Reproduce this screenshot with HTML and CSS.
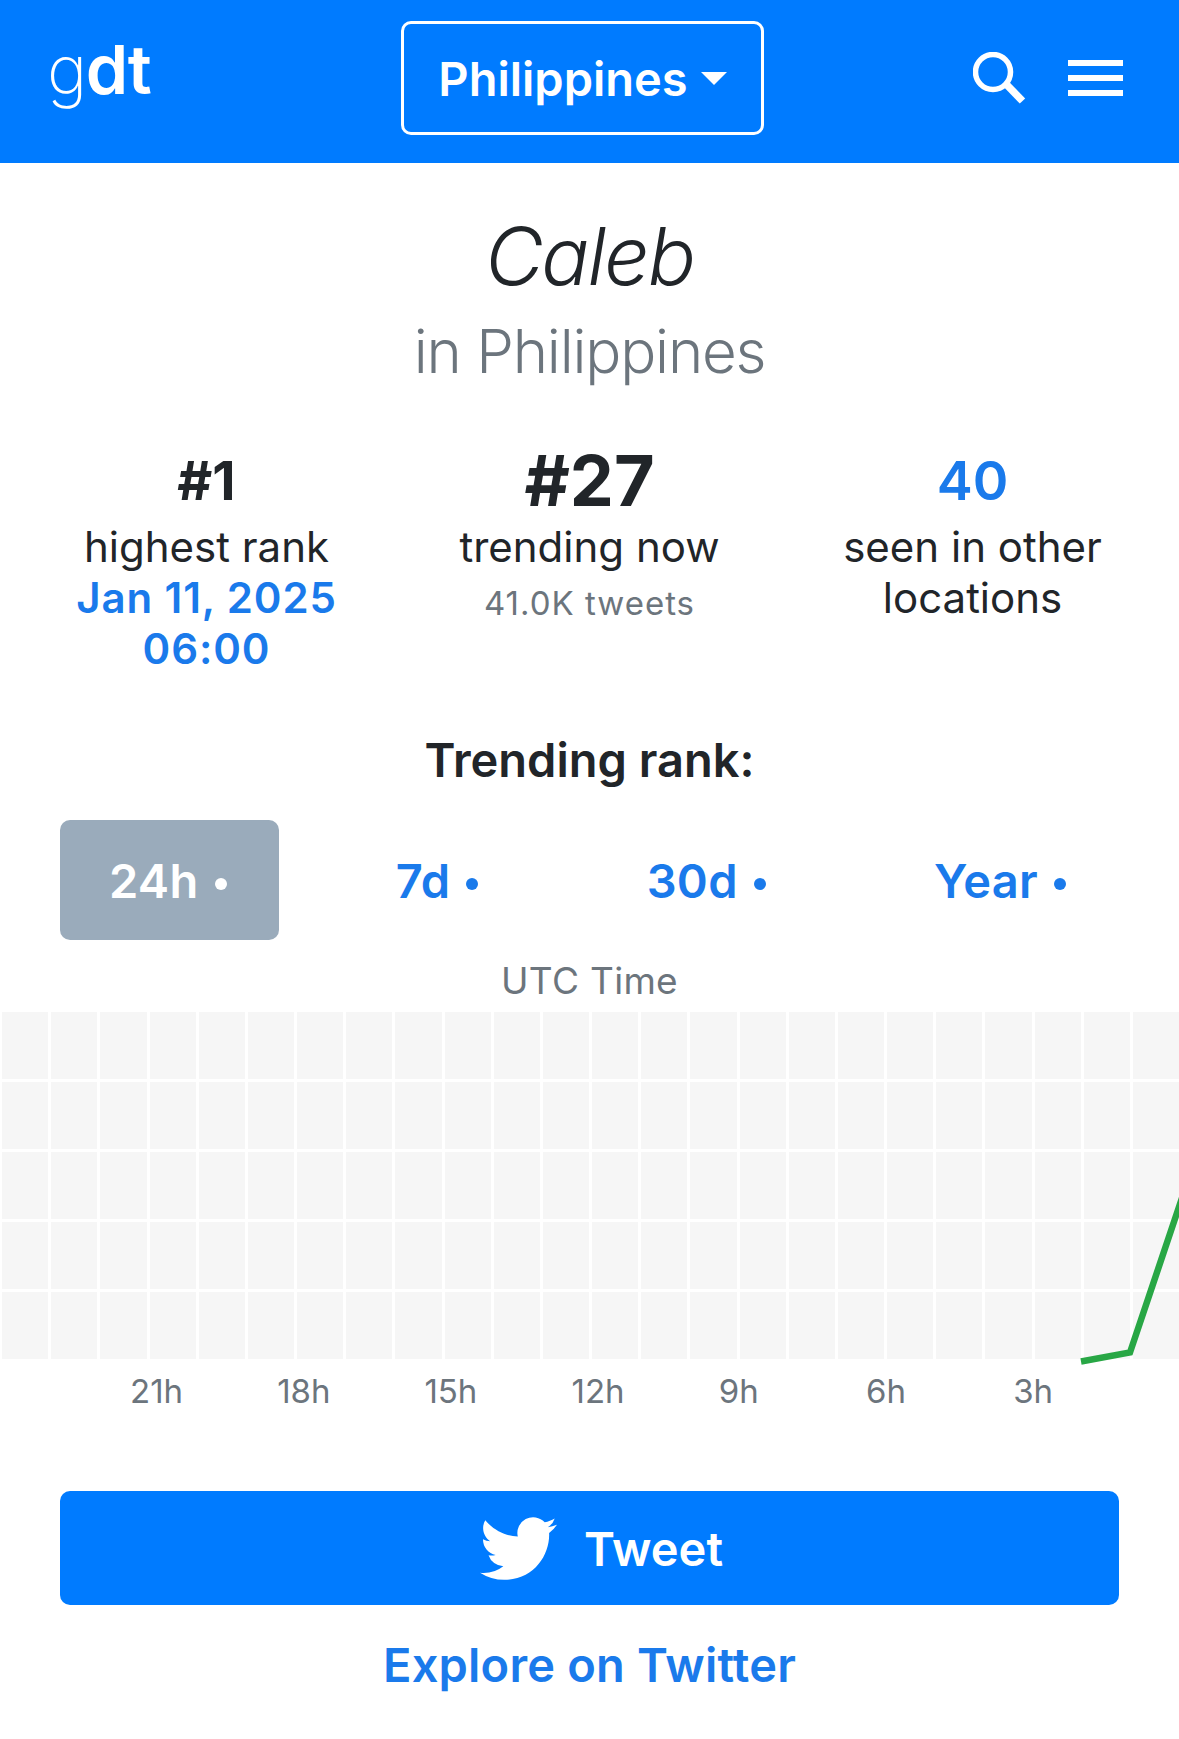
FILE: index.html
```html
<!DOCTYPE html>
<html lang="en">
<head>
<meta charset="utf-8">
<title>Caleb in Philippines</title>
<link rel="stylesheet" href="styles.css">
</head>
<body>
<header class="topbar">
  <a class="logo"><span class="logo-g">g</span><span class="logo-d">d</span><span class="logo-t">t</span></a>
  <button class="country">Philippines<span class="caret"></span></button>
  <div class="actions">
    <svg class="search" viewBox="0 0 54 54" aria-hidden="true"><circle cx="20" cy="20" r="17.500" fill="none" stroke="#fff" stroke-width="5.500"/><path d="M33 32L49.500 49" stroke="#fff" stroke-width="7.500"/></svg>
    <div class="burger"><i></i><i></i><i></i></div>
  </div>
</header>
<main>
  <h1 class="term">Caleb</h1>
  <h2 class="place">in Philippines</h2>
  <section class="stats">
    <div class="stat">
      <div class="num">#1</div>
      <div class="lab">highest rank</div>
      <a class="when">Jan 11, 2025<br>06:00</a>
    </div>
    <div class="stat">
      <div class="num big">#27</div>
      <div class="lab">trending now</div>
      <div class="sub">41.0K tweets</div>
    </div>
    <div class="stat">
      <a class="num link">40</a>
      <div class="lab">seen in other<br>locations</div>
    </div>
  </section>
  <h3 class="rank-title">Trending rank:</h3>
  <nav class="tabs">
    <a class="tab active">24h<span class="dot"></span></a>
    <a class="tab">7d<span class="dot"></span></a>
    <a class="tab">30d<span class="dot"></span></a>
    <a class="tab">Year<span class="dot"></span></a>
  </nav>
  <div class="utc">UTC Time</div>
  <div class="chart">
    <div class="grid" id="grid"></div>
    <svg class="line" viewBox="0 0 1179 356" preserveAspectRatio="none" aria-hidden="true"><path d="M1081 349.500L1130 340.500L1182 186" fill="none" stroke="#28a745" stroke-width="6.500"/></svg>
  </div>
  <div class="axis"><span>21h</span><span>18h</span><span>15h</span><span>12h</span><span>9h</span><span>6h</span><span>3h</span></div>
  <a class="tweet">
    <svg class="bird" viewBox="0 0 24 24" aria-hidden="true"><path fill="#fff" d="M23.953 4.57a10 10 0 01-2.825.775 4.958 4.958 0 002.163-2.723c-.951.555-2.005.959-3.127 1.184a4.92 4.92 0 00-8.384 4.482C7.69 8.095 4.067 6.13 1.64 3.162a4.822 4.822 0 00-.666 2.475c0 1.71.87 3.213 2.188 4.096a4.904 4.904 0 01-2.228-.616v.06a4.923 4.923 0 003.946 4.827 4.996 4.996 0 01-2.212.085 4.936 4.936 0 004.604 3.417 9.867 9.867 0 01-6.102 2.105c-.39 0-.779-.023-1.17-.067a13.995 13.995 0 007.557 2.209c9.053 0 13.998-7.496 13.998-13.985 0-.21 0-.42-.015-.63A9.935 9.935 0 0024 4.59z"/></svg>
    Tweet
  </a>
  <a class="explore">Explore on Twitter</a>
</main>
<script src="app.js"></script>
</body>
</html>
```

FILE: app.js
```js
var grid = document.getElementById('grid');
for (var i = 0; i < 120; i++) {
  grid.appendChild(document.createElement('i'));
}
```

FILE: styles.css
```css
* { box-sizing: border-box; }
html, body { margin: 0; padding: 0; }
body {
  width: 1179px;
  height: 1739px;
  overflow: hidden;
  background: #fff;
  color: #212529;
  font-family: Inter, "Liberation Sans", sans-serif;
}
a { display: block; }

.topbar {
  height: 163px;
  background: #007bff;
  display: flex;
  align-items: flex-start;
  padding: 21px 56px 0 47px;
  position: relative;
  color: #fff;
}
.logo {
  font-size: 68px;
  line-height: 1;
  letter-spacing: -1.5px;
  margin-top: 14px;
  width: 354px;
}
.logo-g { font-weight: 200; }
.logo-d { font-weight: 600; }
.logo-t { font-weight: 600; }
.country {
  width: 363px;
  height: 114px;
  border: 3px solid #fff;
  border-radius: 10px;
  background: transparent;
  color: #fff;
  font: 600 47px Inter, sans-serif;
  padding: 0;
  display: flex;
  align-items: center;
  justify-content: center;
}
.caret {
  width: 0;
  height: 0;
  margin-left: 13px;
  border-left: 13px solid transparent;
  border-right: 13px solid transparent;
  border-top: 13px solid #fff;
}
.actions {
  margin-left: auto;
  display: flex;
  align-items: flex-start;
  gap: 41px;
  padding-top: 31px;
}
.search { width: 54px; height: 54px; display: block; }
.burger {
  width: 55px;
  display: flex;
  flex-direction: column;
  gap: 9px;
  margin-top: 8px;
}
.burger i { display: block; height: 6px; background: #fff; }

.term {
  margin: 49px 0 0;
  text-align: center;
  font-size: 80px;
  line-height: 88px;
  font-weight: 300;
  font-style: italic;
  letter-spacing: -2px;
}
.place {
  margin: 16px 0 0;
  text-align: center;
  font-size: 60px;
  line-height: 70px;
  font-weight: 300;
  color: #6c757d;
  letter-spacing: -1.2px;
}
.stats {
  margin-top: 55px;
  padding: 0 15px;
  display: grid;
  grid-template-columns: repeat(3, 1fr);
  text-align: center;
  height: 246px;
}
.num {
  font-size: 54px;
  line-height: 80px;
  font-weight: 700;
}
.num.big { font-size: 70px; }
.num.link { font-weight: 600; color: #1a7aeb; font-size: 54px; }
.lab { font-size: 42px; line-height: 51px; }
.when { font-size: 42px; line-height: 51px; font-weight: 600; color: #1a7aeb; letter-spacing: 0.9px; }
.sub { font-size: 33px; line-height: 62px; color: #6c757d; letter-spacing: 1px; }

.rank-title {
  margin: 45px 0 0;
  text-align: center;
  font-size: 47px;
  line-height: 56px;
  font-weight: 600;
}
.tabs {
  margin-top: 32px;
  padding: 0 62px 0 60px;
  display: flex;
  justify-content: space-between;
}
.tab {
  height: 120px;
  padding: 0 51px;
  border-radius: 10px;
  display: flex;
  align-items: center;
  font-size: 47px;
  font-weight: 600;
  letter-spacing: 0.3px;
  color: #1a7aeb;
}
.tab.active { background: #9aabbb; color: #fff; padding: 0 52px 0 49px; }
.dot {
  width: 12px;
  height: 12px;
  border-radius: 50%;
  background: currentColor;
  margin-left: 16px;
  margin-top: 7px;
}
.utc {
  margin-top: 19px;
  text-align: center;
  font-size: 37px;
  line-height: 44px;
  letter-spacing: 0.3px;
  color: #6c757d;
}
.chart {
  position: relative;
  margin-top: 9px;
  height: 347px;
}
.grid {
  height: 347px;
  padding-left: 2px;
  display: grid;
  grid-template-columns: repeat(24, 1fr);
  grid-template-rows: repeat(5, 1fr);
  gap: 3px;
}
.grid i { display: block; background: #f6f6f6; }
.line {
  position: absolute;
  left: 0;
  top: 0;
  width: 1179px;
  height: 356px;
  overflow: hidden;
}
.axis {
  margin-top: 12px;
  padding-left: 130px;
  display: grid;
  grid-template-columns: repeat(7, 147.2px);
  font-size: 33px;
  line-height: 40px;
  color: #6c757d;
}
.tweet {
  margin: 80px 60px 0;
  height: 114px;
  border-radius: 10px;
  background: #007bff;
  color: #fff;
  display: flex;
  align-items: center;
  justify-content: center;
  gap: 27px;
  padding-left: 24px;
  font-size: 47px;
  font-weight: 600;
}
.bird { width: 77px; height: 77px; display: block; }
.explore {
  margin-top: 32px;
  text-align: center;
  font-size: 47px;
  line-height: 56px;
  font-weight: 600;
  letter-spacing: 0.2px;
  color: #1a7aeb;
}
```
